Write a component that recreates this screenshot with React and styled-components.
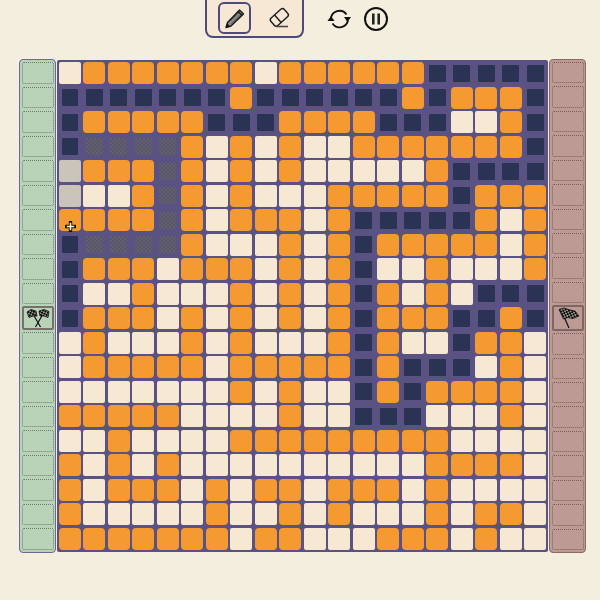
import React from 'react'
import styled, { createGlobalStyle } from 'styled-components'

const GlobalStyle = createGlobalStyle`
  html, body { margin: 0; padding: 0; background: #f4eedf; }
  body { font-family: "Liberation Sans", sans-serif; }
`

const rows = [
  'WOOOOOOOWOOOOOONNNNN',
  'NNNNNNNONNNNNNONOOON',
  'NOOOOONNNOOOONNNWWON',
  'NGGGGOWOWOWWOOOOOOON',
  'LOOOGOWOWOWWWWWONNNN',
  'LWWOGOWOWWWOOOOONOOO',
  'OOOOGOWOOOWONNNNNOWO',
  'NGGGGOWWWOWONOOOOOWO',
  'NOOOWOOOWOWONWWOWWWO',
  'NWWOWWWOWOWONOWOWNNN',
  'NOOOWOWOWOWONOOONNON',
  'WOWWWOWOWWWONOWWNOOW',
  'WOOOOOWOOOOONONNNWOW',
  'WWWWWWWOWOWWNONOOOOW',
  'OOOOOWWWWOWWNNNWWWOW',
  'WWOWWWWOOOOOOOOOWWWW',
  'OWOWOWWWWWWWWWWOOOOW',
  'OWOOOWOWOOWOOOWOWWWW',
  'OWWWWWOWWOWOWWWOWOOW',
  'OOOOOOOWOOWWWOOOWOWW',
]

const cellStyles = {
  O: 'background: #f49a31; border-radius: 4px;',
  W: 'background: #f6e8d3; border-radius: 2px;',
  N: 'background: #2a3353; margin: 2.5px; border-radius: 1px;',
  G: 'background: repeating-conic-gradient(#59566b 0 25%, #625f6f 0 50%) 0 0 / 4px 4px; margin: 2.5px; border-radius: 1px;',
  L: 'background: #cbc4bb; border-radius: 2px;',
}

const Page = styled.div`
  width: 600px;
  height: 600px;
  overflow: hidden;
  display: flex;
  flex-direction: column;
  align-items: center;
`
const TopBar = styled.div`
  height: 38px;
  margin-bottom: 21px;
  display: flex;
  align-items: flex-start;
  gap: 23px;
  transform: translateX(-3px);
`
const ToolGroup = styled.div`
  width: 99px;
  height: 38px;
  box-sizing: border-box;
  border: 2px solid #4e4a7c;
  border-top: none;
  border-radius: 0 0 8px 8px;
  background: #f6e8d5;
  display: flex;
  align-items: flex-start;
  padding: 2px 0 0 11px;
  gap: 12px;
`
const ToolButton = styled.button`
  width: 33px;
  height: 32px;
  padding: 0;
  box-sizing: border-box;
  border: 2px solid ${props => props.$active ? '#4e4a7c' : 'transparent'};
  border-radius: 6px;
  background: transparent;
  display: flex;
  align-items: center;
  justify-content: center;
`
const Controls = styled.div`
  height: 38px;
  display: flex;
  align-items: center;
  gap: 11px;
`
const BoardRow = styled.div`
  display: flex;
  align-items: stretch;
  height: 494px;
  margin-left: 5px;
`
const Rail = styled.div`
  width: 37px;
  box-sizing: border-box;
  padding: 2px 1px 2px 2px;
  border: 1px solid ${props => props.$goal ? '#8a6a68' : '#6d6895'};
  border-radius: 4px;
  background: ${props => props.$goal ? '#bd9a94' : '#b9d3b8'};
  display: grid;
  grid-template-rows: repeat(20, 1fr);
  gap: 3px;
`
const Slot = styled.div`
  box-sizing: border-box;
  border: 1px dotted ${props => props.$goal ? '#7c5c5c' : '#6f7a6f'};
  border-radius: 2px;
`
const FlagSlot = styled.div`
  box-sizing: border-box;
  margin: -1px 0;
  border: 2px solid ${props => props.$goal ? '#7f6662' : '#78716a'};
  border-radius: 2px;
  display: flex;
  align-items: center;
  justify-content: center;
`
const Board = styled.div`
  position: relative;
  width: 491px;
  height: 492px;
  margin: 1px 1px;
  box-sizing: border-box;
  padding: 2px;
  background: #5a5283;
  border-radius: 2px;
  display: grid;
  grid-template-columns: repeat(20, 1fr);
  grid-template-rows: repeat(20, 1fr);
  gap: 2.5px;
`
const Cell = styled.div`
  position: relative;
  ${props => cellStyles[props.$kind]}
`
const CursorMark = styled.svg`
  position: absolute;
  left: 6px;
  top: 12px;
`

const PencilIcon = () => (
  <svg width="24" height="24" viewBox="0 0 24 24">
    <path d="M4.5 16.5 L16.5 4 L20.5 8 L8 20 L3 21.5 Z" fill="#8a8a8a" stroke="#1c1c1c" strokeWidth="1.4" strokeLinejoin="round" />
    <path d="M7 15 L17.5 5 M9 17.5 L19.5 7" stroke="#333" strokeWidth="0.9" />
    <path d="M15 5.5 L19 9.5" stroke="#1c1c1c" strokeWidth="1.2" />
    <path d="M3 21.5 L4.2 17.6 L6.8 20.2 Z" fill="#111" />
  </svg>
)

const EraserIcon = () => (
  <svg width="26" height="26" viewBox="0 0 26 26">
    <g transform="rotate(-42 12 12)" fill="none" stroke="#1c1c1c" strokeWidth="1.4">
      <rect x="3" y="7.5" width="18" height="10" rx="2.5" />
      <path d="M10 7.5 V17.5" />
    </g>
    <path d="M9 21.5 H21" stroke="#4a4a4a" strokeWidth="1.6" />
  </svg>
)

const RefreshIcon = () => (
  <svg width="25" height="24" viewBox="0 0 25 24">
    <path d="M4 12 A8.5 8.5 0 0 1 19.5 7.5" fill="none" stroke="#111" strokeWidth="1.8" />
    <path d="M21 13 A8.5 8.5 0 0 1 5.5 16.5" fill="none" stroke="#111" strokeWidth="1.8" />
    <path d="M17 10 L24 10 L20.5 15 Z" fill="#111" />
    <path d="M0.5 14 L7.5 14 L4 9 Z" fill="#111" />
  </svg>
)

const PauseIcon = () => (
  <svg width="26" height="26" viewBox="0 0 26 26">
    <circle cx="13" cy="13" r="11" fill="none" stroke="#111" strokeWidth="2" />
    <rect x="9" y="7.5" width="2.6" height="11" fill="#222" />
    <rect x="14.4" y="7.5" width="2.6" height="11" fill="#222" />
  </svg>
)

const CheckDefs = ({ id, angle }) => (
  <defs>
    <pattern id={id} width="3.6" height="3.6" patternUnits="userSpaceOnUse" patternTransform={`rotate(${angle})`}>
      <rect width="3.6" height="3.6" fill="#a8a498" />
      <rect width="2" height="2" fill="#000" />
      <rect x="1.8" y="1.8" width="2" height="2" fill="#000" />
    </pattern>
  </defs>
)

const CrossedFlags = () => (
  <svg width="24" height="20" viewBox="0 0 24 20">
    <CheckDefs id="chk-a" angle="-20" />
    <path d="M7 6 L14.5 19 M17 6 L9.5 19" stroke="#111" strokeWidth="1.2" fill="none" />
    <path d="M1 4 L5 1.5 L10 3 L11 8 L7 8 L3 9.5 Z" fill="url(#chk-a)" stroke="#111" strokeWidth="0.8" />
    <path d="M13 3 L18 1.5 L23 3.5 L22 9.5 L18 8 L14 8 Z" fill="url(#chk-a)" stroke="#111" strokeWidth="0.8" />
  </svg>
)

const SingleFlag = () => (
  <svg width="24" height="22" viewBox="0 0 24 22">
    <CheckDefs id="chk-b" angle="20" />
    <path d="M5 3 L13 21" stroke="#111" strokeWidth="1.2" fill="none" />
    <path d="M3 2.5 L8 1 L14 3 L19 4 L23 9 L17 11.5 L12 10.5 L7.5 12 Z" fill="url(#chk-b)" stroke="#111" strokeWidth="0.8" />
  </svg>
)

const SideRail = ({ goal }) => (
  <Rail $goal={goal}>
    {rows.map((_, i) => i === 10
      ? <FlagSlot key={i} $goal={goal}>{goal ? <SingleFlag /> : <CrossedFlags />}</FlagSlot>
      : <Slot key={i} $goal={goal} />)}
  </Rail>
)

const App = () => {
  return (
    <Page>
      <GlobalStyle />
      <TopBar>
        <ToolGroup>
          <ToolButton $active aria-label="pencil"><PencilIcon /></ToolButton>
          <ToolButton aria-label="eraser"><EraserIcon /></ToolButton>
        </ToolGroup>
        <Controls>
          <RefreshIcon />
          <PauseIcon />
        </Controls>
      </TopBar>
      <BoardRow>
        <SideRail />
        <Board>
          {rows.map((row, r) => row.split('').map((kind, c) => (
            <Cell key={`${r}-${c}`} $kind={kind}>
              {r === 6 && c === 0 && (
                <CursorMark width="11" height="11" viewBox="0 0 11 11">
                  <path d="M5.5 1 V10 M1 5.5 H10" stroke="#111" strokeWidth="3.4" strokeLinecap="round" />
                  <path d="M5.5 1.8 V9.2 M1.8 5.5 H9.2" stroke="#f4f0e6" strokeWidth="1.6" />
                </CursorMark>
              )}
            </Cell>
          )))}
        </Board>
        <SideRail goal />
      </BoardRow>
    </Page>
  )
}

export default App
